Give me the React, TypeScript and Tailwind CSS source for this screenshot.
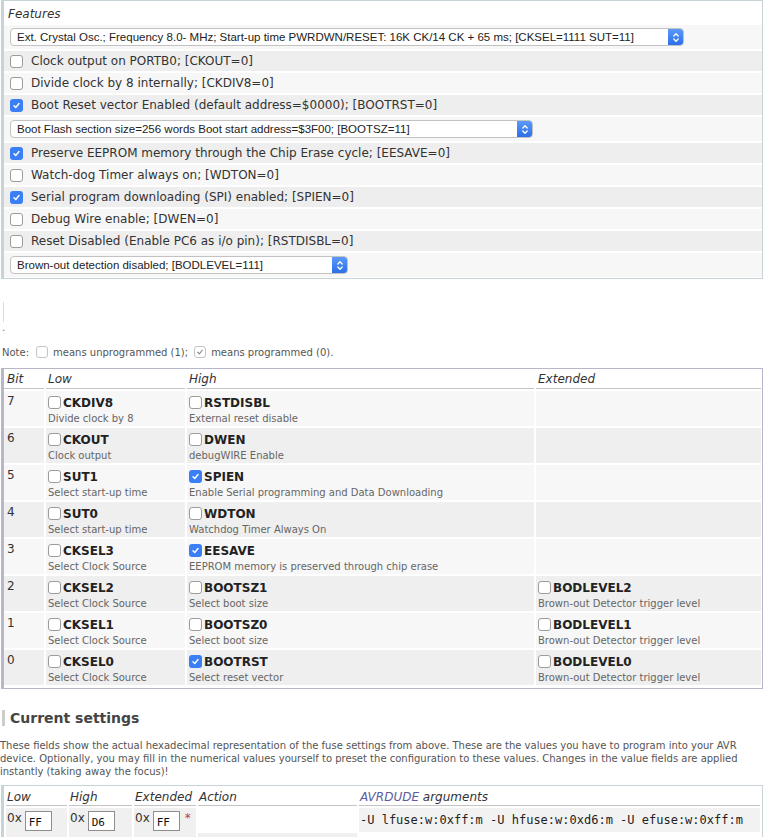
import React from "react";

const features = [
  {
    kind: "select",
    text: "Ext. Crystal Osc.; Frequency 8.0- MHz; Start-up time PWRDWN/RESET: 16K CK/14 CK + 65 ms; [CKSEL=1111 SUT=11]",
    width: "w-[674px]",
  },
  { kind: "check", checked: false, text: "Clock output on PORTB0; [CKOUT=0]" },
  { kind: "check", checked: false, text: "Divide clock by 8 internally; [CKDIV8=0]" },
  { kind: "check", checked: true, text: "Boot Reset vector Enabled (default address=$0000); [BOOTRST=0]" },
  {
    kind: "select",
    text: "Boot Flash section size=256 words Boot start address=$3F00; [BOOTSZ=11]",
    width: "w-[523px]",
  },
  { kind: "check", checked: true, text: "Preserve EEPROM memory through the Chip Erase cycle; [EESAVE=0]" },
  { kind: "check", checked: false, text: "Watch-dog Timer always on; [WDTON=0]" },
  { kind: "check", checked: true, text: "Serial program downloading (SPI) enabled; [SPIEN=0]" },
  { kind: "check", checked: false, text: "Debug Wire enable; [DWEN=0]" },
  { kind: "check", checked: false, text: "Reset Disabled (Enable PC6 as i/o pin); [RSTDISBL=0]" },
  {
    kind: "select",
    text: "Brown-out detection disabled; [BODLEVEL=111]",
    width: "w-[338px]",
  },
];

type Fuse = { name: string; desc: string; checked?: boolean } | null;

const bits: { bit: number; low: Fuse; high: Fuse; ext: Fuse }[] = [
  { bit: 7, low: { name: "CKDIV8", desc: "Divide clock by 8" }, high: { name: "RSTDISBL", desc: "External reset disable" }, ext: null },
  { bit: 6, low: { name: "CKOUT", desc: "Clock output" }, high: { name: "DWEN", desc: "debugWIRE Enable" }, ext: null },
  { bit: 5, low: { name: "SUT1", desc: "Select start-up time" }, high: { name: "SPIEN", desc: "Enable Serial programming and Data Downloading", checked: true }, ext: null },
  { bit: 4, low: { name: "SUT0", desc: "Select start-up time" }, high: { name: "WDTON", desc: "Watchdog Timer Always On" }, ext: null },
  { bit: 3, low: { name: "CKSEL3", desc: "Select Clock Source" }, high: { name: "EESAVE", desc: "EEPROM memory is preserved through chip erase", checked: true }, ext: null },
  { bit: 2, low: { name: "CKSEL2", desc: "Select Clock Source" }, high: { name: "BOOTSZ1", desc: "Select boot size" }, ext: { name: "BODLEVEL2", desc: "Brown-out Detector trigger level" } },
  { bit: 1, low: { name: "CKSEL1", desc: "Select Clock Source" }, high: { name: "BOOTSZ0", desc: "Select boot size" }, ext: { name: "BODLEVEL1", desc: "Brown-out Detector trigger level" } },
  { bit: 0, low: { name: "CKSEL0", desc: "Select Clock Source" }, high: { name: "BOOTRST", desc: "Select reset vector", checked: true }, ext: { name: "BODLEVEL0", desc: "Brown-out Detector trigger level" } },
];

function CheckBox({ checked, small }: { checked?: boolean; small?: boolean }) {
  const size = small ? "h-[12px] w-[12px]" : "h-[13px] w-[13px]";
  if (checked) {
    return (
      <span className={`${size} flex shrink-0 items-center justify-center rounded-[3px] bg-[#3a7ff6]`}>
        <svg width="9" height="9" viewBox="0 0 10 10">
          <path d="M2.2 5.3 L4.2 7.3 L7.8 2.8" fill="none" stroke="white" strokeWidth="1.6" strokeLinecap="round" strokeLinejoin="round" />
        </svg>
      </span>
    );
  }
  return <span className={`${size} block shrink-0 rounded-[3px] border border-[#9c9c9c] bg-white`} />;
}

function Select({ text, width }: { text: string; width: string }) {
  return (
    <div className={`${width} flex h-[18px] items-center rounded-[4px] border border-[#c2c2c2] bg-white`}>
      <span className="flex-1 truncate pl-[6px] font-['Liberation_Sans',Arial,sans-serif] text-[11.5px] leading-[16px] text-[#222]">
        {text}
      </span>
      <span className="flex h-[16px] w-[15px] items-center justify-center rounded-r-[3px] bg-gradient-to-b from-[#5a9af9] to-[#2d6fe9]">
        <svg width="8" height="11" viewBox="0 0 8 11">
          <path d="M1.8 4 L4 1.8 L6.2 4 M1.8 7 L4 9.2 L6.2 7" fill="none" stroke="white" strokeWidth="1.3" strokeLinecap="round" strokeLinejoin="round" />
        </svg>
      </span>
    </div>
  );
}

function FuseCell({ fuse, bg }: { fuse: Fuse; bg: string }) {
  return (
    <div className={`${bg} px-[2px] pt-[2px]`}>
      {fuse && (
        <>
          <div className="flex h-[19px] items-center">
            <CheckBox checked={fuse.checked} />
            <span className="ml-[2px] text-[12px] font-bold text-[#222]">{fuse.name}</span>
          </div>
          <div className="text-[10px] leading-[14px] text-[#666]">{fuse.desc}</div>
        </>
      )}
    </div>
  );
}

export default function App() {
  return (
    <div className="min-h-[837px] w-[765px] bg-white font-['DejaVu_Sans',Verdana,sans-serif] text-[#333]">
      {/* Features */}
      <div className="ml-[1px] w-[762px] border border-l-[3px] border-[#c6d4d7] pb-[1px]">
        <div className="flex flex-col gap-[2px]">
          <div className="h-[22px] pl-[4px] pt-[2px] text-[12px] italic leading-[22px] text-[#333]">Features</div>
          {features.map((f, i) => {
            const bg = i % 2 === 0 ? "bg-[#f7f7f7]" : "bg-[#eeeeee]";
            if (f.kind === "select") {
              return (
                <div key={i} className={`${bg} flex h-[24px] items-center pl-[6px]`}>
                  <Select text={f.text} width={f.width ?? ""} />
                </div>
              );
            }
            return (
              <div key={i} className={`${bg} flex h-[20px] items-center pl-[6px]`}>
                <CheckBox checked={f.checked} />
                <span className="ml-[8px] text-[12px] text-[#333]">{f.text}</span>
              </div>
            );
          })}
        </div>
      </div>

      {/* leftovers between the blocks */}
      <div className="ml-[3px] mt-[23px] h-[20px] border-l border-[#dddddd]" />
      <div className="h-[12px] pl-[2px] text-[10px] leading-[12px] text-[#777]">.</div>

      {/* Note */}
      <div className="mt-[11px] flex h-[14px] items-center pl-[2px] text-[10px] text-[#555]">
        <span>Note:</span>
        <span className="ml-[7px] block h-[12px] w-[12px] rounded-[3px] border border-[#c4c4c4] bg-white" />
        <span className="ml-[5px]">means unprogrammed (1);</span>
        <span className="ml-[6px] flex h-[12px] w-[12px] items-center justify-center rounded-[3px] border border-[#c4c4c4] bg-white">
          <svg width="8" height="8" viewBox="0 0 10 10">
            <path d="M2.2 5.3 L4.2 7.3 L7.8 2.8" fill="none" stroke="#8a8a8a" strokeWidth="1.4" strokeLinecap="round" strokeLinejoin="round" />
          </svg>
        </span>
        <span className="ml-[5px]">means programmed (0).</span>
      </div>

      {/* Fuse bits table */}
      <div className="ml-[1px] mt-[9px] w-[762px] border border-l-[3px] border-[#b7b7c9] pb-[3px] pr-[1px]">
        <div className="grid grid-cols-[40px_139px_347px_225px] gap-[2px]">
          <div className="h-[20px] border-b border-[#c4c4c4] pl-[3px] pt-[2px] text-[12px] italic leading-[17px]">Bit</div>
          <div className="h-[20px] border-b border-[#c4c4c4] pl-[2px] pt-[2px] text-[12px] italic leading-[17px]">Low</div>
          <div className="h-[20px] border-b border-[#c4c4c4] pl-[2px] pt-[2px] text-[12px] italic leading-[17px]">High</div>
          <div className="h-[20px] border-b border-[#c4c4c4] pl-[2px] pt-[2px] text-[12px] italic leading-[17px]">Extended</div>
          {bits.map((r, i) => {
            const bg = i % 2 === 0 ? "bg-[#f7f7f7]" : "bg-[#efefef]";
            return (
              <React.Fragment key={r.bit}>
                <div className={`${bg} h-[35px] pl-[3px] pt-[2px] text-[12px] leading-[16px]`}>{r.bit}</div>
                <FuseCell fuse={r.low} bg={bg} />
                <FuseCell fuse={r.high} bg={bg} />
                <FuseCell fuse={r.ext} bg={bg} />
              </React.Fragment>
            );
          })}
        </div>
      </div>

      {/* Current settings */}
      <div className="ml-[2px] mt-[21px] h-[16px] border-l-[3px] border-[#cccccc] pl-[5px] text-[14px] font-bold leading-[16px] text-[#444]">
        Current settings
      </div>
      <p className="mt-[13px] text-[10px] leading-[13px] text-[#555]">
        These fields show the actual hexadecimal representation of the fuse settings from above. These are the values you have to program into your AVR
        <br />
        device. Optionally, you may fill in the numerical values yourself to preset the configuration to these values. Changes in the value fields are applied
        <br />
        instantly (taking away the focus)!
      </p>

      <div className="ml-[1px] mt-[7px] w-[762px] border border-l-[3px] border-[#c6d4d7] px-[2px] pt-[1px]">
        <div className="grid grid-cols-[61px_63px_62px_159px_1fr] gap-[2px]">
          <div className="h-[19px] border-b border-[#c4c4c4] pl-[1px] pt-[3px] text-[12px] italic leading-[15px]">Low</div>
          <div className="h-[19px] border-b border-[#c4c4c4] pl-[1px] pt-[3px] text-[12px] italic leading-[15px]">High</div>
          <div className="h-[19px] border-b border-[#c4c4c4] pl-[1px] pt-[3px] text-[12px] italic leading-[15px]">Extended</div>
          <div className="h-[19px] border-b border-[#c4c4c4] pl-[1px] pt-[3px] text-[12px] italic leading-[15px]">Action</div>
          <div className="h-[19px] border-b border-[#c4c4c4] pl-[1px] pt-[3px] text-[12px] italic leading-[15px]">
            <span className="text-[#5b5b9e]">AVRDUDE</span> arguments
          </div>

          {[
            { v: "FF", star: false },
            { v: "D6", star: false },
            { v: "FF", star: true },
          ].map((c, i) => (
            <div key={i} className="flex h-[50px] items-start bg-[#f0f0f0] pl-[1px] pt-[2px]">
              <span className="text-[12px] leading-[16px] text-[#333]">0x</span>
              <span className="ml-[3px] mt-[1px] block h-[20px] w-[27px] border border-[#8e8e8e] bg-white pl-[3px] pt-[4px] font-['DejaVu_Sans_Mono',monospace] text-[11px] leading-[13px] text-[#111]">
                {c.v}
              </span>
              {c.star && <span className="ml-[5px] text-[12px] leading-[16px] text-[#c0392b]">*</span>}
            </div>
          ))}
          <div className="h-[50px] bg-[#f0f0f0]">
            <div className="h-[25px] bg-white" />
          </div>
          <div className="h-[50px]">
            <div className="flex h-[24px] items-center bg-[#f2f2f2] pl-[1px] font-['DejaVu_Sans_Mono',monospace] text-[12px] text-[#222]">
              -U lfuse:w:0xff:m -U hfuse:w:0xd6:m -U efuse:w:0xff:m
            </div>
            <div className="pl-[1px] pt-[3px] text-[10px] leading-[13px] text-[#888]">
              Select (by triple click) and copy and paste this options string into your avrdude command line
            </div>
          </div>
        </div>
      </div>
    </div>
  );
}
